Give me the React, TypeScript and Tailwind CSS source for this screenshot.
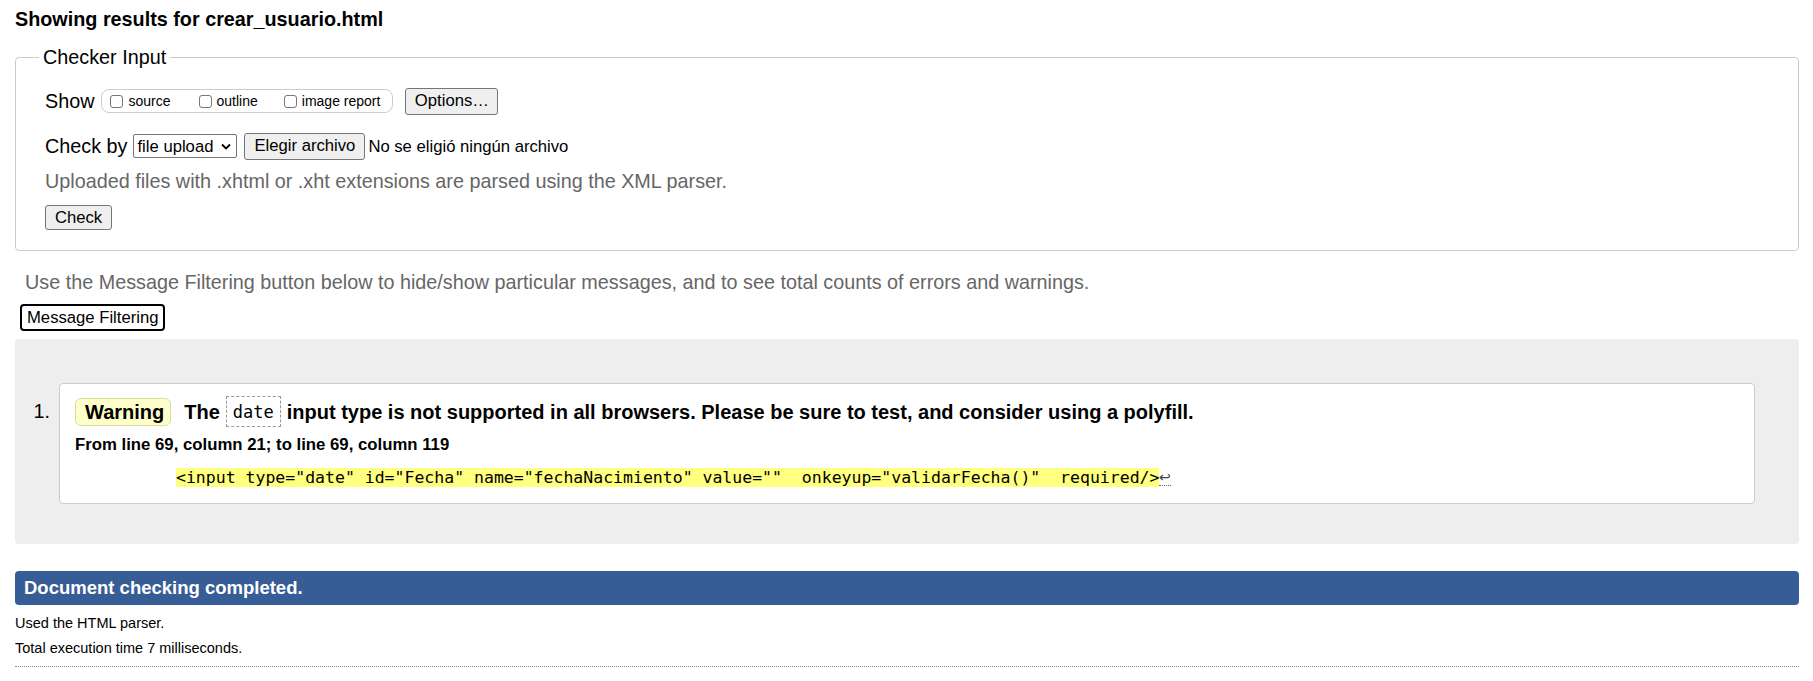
import type { ReactNode } from "react";

const sans = { fontFamily: '"Liberation Sans", Arial, sans-serif' };
const mono = { fontFamily: '"DejaVu Sans Mono", monospace' };

function Box({ label }: { label: string }) {
  return (
    <span className="flex items-center">
      <span className="inline-block h-[13px] w-[13px] rounded-[3px] border border-[#767676] bg-white" />
      <span className="ml-[5px] text-[14px] leading-[16px]">{label}</span>
    </span>
  );
}

function Btn({ children, className = "" }: { children: ReactNode; className?: string }) {
  return (
    <button
      className={
        "flex items-center justify-center whitespace-nowrap rounded-[3px] border border-[#767676] bg-[#efefef] px-[9px] text-[16.67px] leading-[20px] text-black " +
        className
      }
    >
      {children}
    </button>
  );
}

export default function App() {
  return (
    <div className="min-h-screen bg-white pl-[15px] pr-[14px] text-black" style={sans}>
      <h2 className="pt-[7px] text-[19.8px] font-bold leading-[24px]">Showing results for crear_usuario.html</h2>

      <fieldset className="mt-[14px] rounded-[4px] border border-[#cccccc] pb-[20px] pl-[29px] pt-[18px]">
        <legend className="-ml-[6px] px-[4px] text-[19.8px] leading-[24px]">Checker Input</legend>

        <div className="flex h-[28px] items-center">
          <span className="text-[19.8px] leading-[24px]">Show</span>
          <div className="ml-[7px] flex h-[24px] items-center rounded-[8px] border border-[#cccccc] pl-[8px] pr-[12px]">
            <Box label="source" />
            <span className="w-[28px]" />
            <Box label="outline" />
            <span className="w-[26px]" />
            <Box label="image report" />
          </div>
          <Btn className="ml-[12px] h-[27px] w-[93px]">Options…</Btn>
        </div>

        <div className="mt-[17px] flex h-[28px] items-center">
          <span className="text-[19.8px] leading-[24px]">Check by</span>
          <div className="ml-[6px] flex h-[24px] w-[104px] items-center justify-between rounded-[2px] border border-[#767676] pl-[3px] pr-[5px] text-[16.67px]">
            <span>file upload</span>
            <svg width="10" height="7" viewBox="0 0 10 7" fill="none">
              <path d="M1 1.5 5 5.5 9 1.5" stroke="#000" strokeWidth="1.8" />
            </svg>
          </div>
          <Btn className="ml-[7px] h-[27px]">Elegir archivo</Btn>
          <span className="ml-[3px] whitespace-nowrap text-[16.67px]">No se eligió ningún archivo</span>
        </div>

        <p className="mt-[9px] text-[19.8px] leading-[24px] text-[#666666]">
          Uploaded files with .xhtml or .xht extensions are parsed using the XML parser.
        </p>

        <Btn className="mt-[12px] h-[25px] w-[67px]">Check</Btn>
      </fieldset>

      <p className="mt-[19px] pl-[10px] text-[19.8px] leading-[24px] text-[#666666]">
        Use the Message Filtering button below to hide/show particular messages, and to see total counts of errors
        and warnings.
      </p>

      <button className="ml-[5px] mt-[10px] h-[27px] rounded-[4px] border-2 border-black bg-white px-[5px] text-[16.67px] leading-[20px]">
        Message Filtering
      </button>

      <div className="mt-[8px] flex rounded-[4px] bg-[#eeeeee] pb-[40px] pr-[44px] pt-[44px]">
        <div className="w-[44px] shrink-0 pr-[9px] pt-[16px] text-right text-[19.8px] leading-[24px]">1.</div>
        <div className="flex-1 rounded-[4px] border border-[#cccccc] bg-white pb-[16px] pl-[15px] pt-[12px]">
          <div className="flex h-[31px] items-center text-[20px] font-bold leading-[24px]">
            <span className="flex h-[28px] items-center rounded-[6px] border border-[#dddd99] bg-[#ffffcc] pl-[9px] pr-[6px]">
              Warning
            </span>
            <span className="ml-[13px]">The</span>
            <code
              className="mx-[6px] flex h-[31px] items-center border border-dashed border-[#999999] px-[6px] text-[17px] font-normal"
              style={mono}
            >
              date
            </code>
            <span>input type is not supported in all browsers. Please be sure to test, and consider using a polyfill.</span>
          </div>

          <p className="mt-[7px] text-[16.75px] font-bold leading-[22px]">From line 69, column 21; to line 69, column 119</p>

          <p className="ml-[101px] mt-[12px] flex h-[19px] items-center">
            <code className="whitespace-pre bg-[#ffff80] text-[16.5px] leading-[19px]" style={mono}>
              {'<input type="date" id="Fecha" name="fechaNacimiento" value=""  onkeyup="validarFecha()"  required/>'}
            </code>
            <span className="border-b border-dotted border-[#666666] text-[14px] leading-[16px] text-[#444444]">↩</span>
          </p>
        </div>
      </div>

      <div className="mt-[27px] flex h-[34px] items-center rounded-[4px] bg-[#365d95] pl-[9px] text-[18.5px] font-bold text-white">
        Document checking completed.
      </div>

      <p className="mt-[8px] text-[14.5px] leading-[20px]">Used the HTML parser.</p>
      <p className="mt-[5px] text-[14.5px] leading-[20px]">Total execution time 7 milliseconds.</p>
      <div className="mt-[8px] border-t border-dotted border-[#888888]" />
    </div>
  );
}
